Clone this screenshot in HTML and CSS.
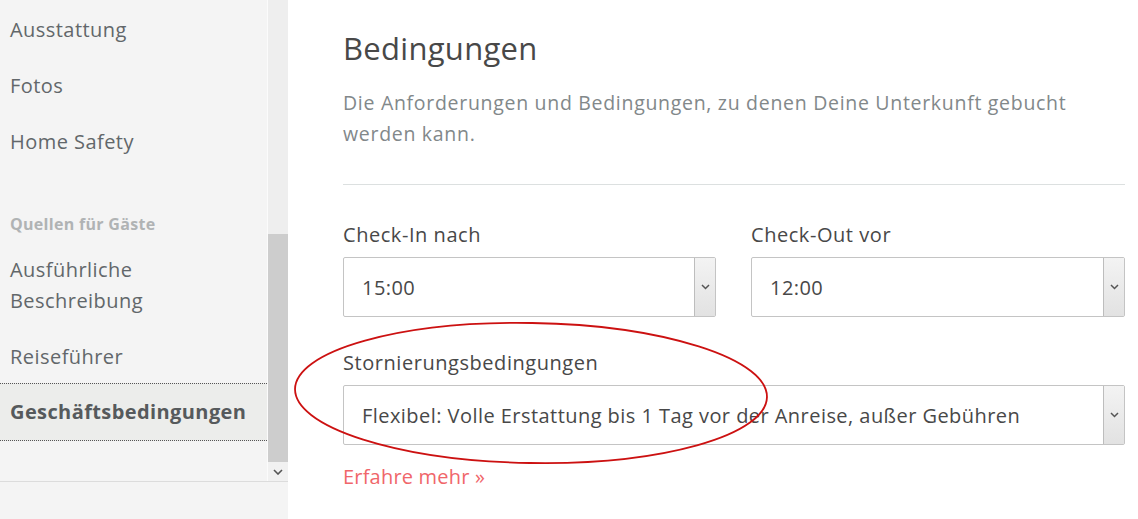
FILE: index.html
```html
<!DOCTYPE html>
<html lang="de">
<head>
<meta charset="utf-8">
<title>Bedingungen</title>
<link rel="stylesheet" href="styles.css">
</head>
<body>
<div class="page">
  <aside class="sidebar">
    <div class="scroller">
      <nav class="nav">
        <a class="nav-item">Ausstattung</a>
        <a class="nav-item">Fotos</a>
        <a class="nav-item">Home Safety</a>
        <div class="nav-heading">Quellen für Gäste</div>
        <a class="nav-item">Ausführliche<br>Beschreibung</a>
        <a class="nav-item">Reiseführer</a>
        <a class="nav-item active">Geschäftsbedingungen</a>
      </nav>
      <div class="scrollbar">
        <div class="track"><div class="thumb"></div></div>
        <div class="arrow">
          <svg width="10" height="6" viewBox="0 0 10 6"><path d="M1 1 L5 5 L9 1" fill="none" stroke="#555" stroke-width="1.6"/></svg>
        </div>
      </div>
    </div>
    <div class="sidebar-foot"></div>
  </aside>
  <main class="main">
    <h1 class="title">Bedingungen</h1>
    <p class="desc">Die Anforderungen und Bedingungen, zu denen Deine Unterkunft gebucht werden kann.</p>
    <hr class="rule">
    <div class="row">
      <div class="field">
        <label class="label">Check-In nach</label>
        <div class="select"><span class="value">15:00</span><span class="btn"><svg width="9" height="6" viewBox="0 0 9 6"><path d="M1 1 L4.5 4.5 L8 1" fill="none" stroke="#555" stroke-width="1.5"/></svg></span></div>
      </div>
      <div class="field">
        <label class="label">Check-Out vor</label>
        <div class="select"><span class="value">12:00</span><span class="btn"><svg width="9" height="6" viewBox="0 0 9 6"><path d="M1 1 L4.5 4.5 L8 1" fill="none" stroke="#555" stroke-width="1.5"/></svg></span></div>
      </div>
    </div>
    <div class="field wide">
      <label class="label">Stornierungsbedingungen</label>
      <div class="select"><span class="value">Flexibel: Volle Erstattung bis 1 Tag vor der Anreise, außer Gebühren</span><span class="btn"><svg width="9" height="6" viewBox="0 0 9 6"><path d="M1 1 L4.5 4.5 L8 1" fill="none" stroke="#555" stroke-width="1.5"/></svg></span></div>
      <a class="more">Erfahre mehr »</a>
      <svg class="ellipse" width="480" height="150" viewBox="0 0 480 150"><ellipse cx="238" cy="73" rx="236" ry="70" transform="rotate(1 238 73)" fill="none" stroke="#cc1111" stroke-width="1.8"/></svg>
    </div>
  </main>
</div>
</body>
</html>
```
FILE: styles.css
```css
* { box-sizing: border-box; }
html, body { margin: 0; padding: 0; background: #fff; }
body {
  font-family: "Open Sans", "Noto Sans", sans-serif;
  color: #565a5c;
  width: 1138px;
  height: 519px;
  overflow: hidden;
}
.page { display: flex; height: 519px; }

.sidebar {
  width: 288px;
  flex: 0 0 288px;
  background: #f4f4f4;
  display: flex;
  flex-direction: column;
}
.scroller { display: flex; height: 481px; }
.nav {
  width: 268px;
  padding-top: 2px;
  display: flex;
  flex-direction: column;
  border-right: 1px solid #fbfbfb;
}
.nav-item {
  display: block;
  padding: 12px 10px 13px;
  font-size: 20px;
  letter-spacing: 0.45px;
  line-height: 31px;
  color: #62676a;
}
.nav-heading {
  padding: 44px 10px 7px;
  height: 72px;
  font-size: 16px;
  letter-spacing: 0.3px;
  line-height: 21px;
  font-weight: 700;
  color: #b0b3b4;
}
.nav-item.active {
  font-weight: 700;
  letter-spacing: 0.4px;
  color: #565a5c;
  background: #ecedeb;
  border-top: 1px dotted #555;
  border-bottom: 1px dotted #555;
  padding: 12px 10px 13px;
  margin-top: -2px;
}
.scrollbar {
  width: 20px;
  display: flex;
  flex-direction: column;
  background: #eeeeee;
}
.track { flex: 1; padding-top: 234px; display: flex; flex-direction: column; }
.thumb { flex: 1; background: #cdcdcd; }
.arrow {
  height: 19px;
  display: flex;
  align-items: center;
  justify-content: center;
  background: #f1f1f1;
}
.sidebar-foot { flex: 1; border-top: 1px solid #dcdcdc; background: #f4f4f4; }

.main {
  flex: 1;
  padding: 0 13px 0 55px;
}
.title {
  margin: 29px 0 0;
  font-size: 31px;
  letter-spacing: 0.3px;
  line-height: 38px;
  font-weight: 400;
  color: #484848;
}
.desc {
  margin: 20px 0 0;
  font-size: 19.5px;
  letter-spacing: 0.7px;
  line-height: 31px;
  color: #82888a;
}
.rule {
  margin: 35px 0 0;
  border: 0;
  border-top: 1px solid #dce0e0;
  height: 0;
}
.row { display: grid; grid-template-columns: 373px 1fr; gap: 35px; margin-top: 36px; }
.field { position: relative; }
.label {
  display: block;
  font-size: 20px;
  letter-spacing: 0.55px;
  line-height: 27px;
  color: #484848;
  margin-bottom: 9px;
}
.select {
  height: 60px;
  border: 1px solid #c4c4c4;
  border-radius: 2px;
  display: flex;
  align-items: center;
  justify-content: space-between;
  background: #fff;
}
.value { padding-left: 18px; font-size: 20px; letter-spacing: 0.45px; color: #484848; }
.btn {
  width: 21px;
  height: 58px;
  border-left: 1px solid #bdbdbd;
  background: linear-gradient(#f3f3f3, #e2e2e2);
  display: flex;
  align-items: center;
  justify-content: center;
}
.wide { margin-top: 32px; }
.more {
  display: block;
  margin-top: 18px;
  font-size: 20px;
  letter-spacing: 0.2px;
  color: #f0666a;
}
.ellipse {
  position: absolute;
  left: -50px;
  top: -29px;
  pointer-events: none;
}
```
